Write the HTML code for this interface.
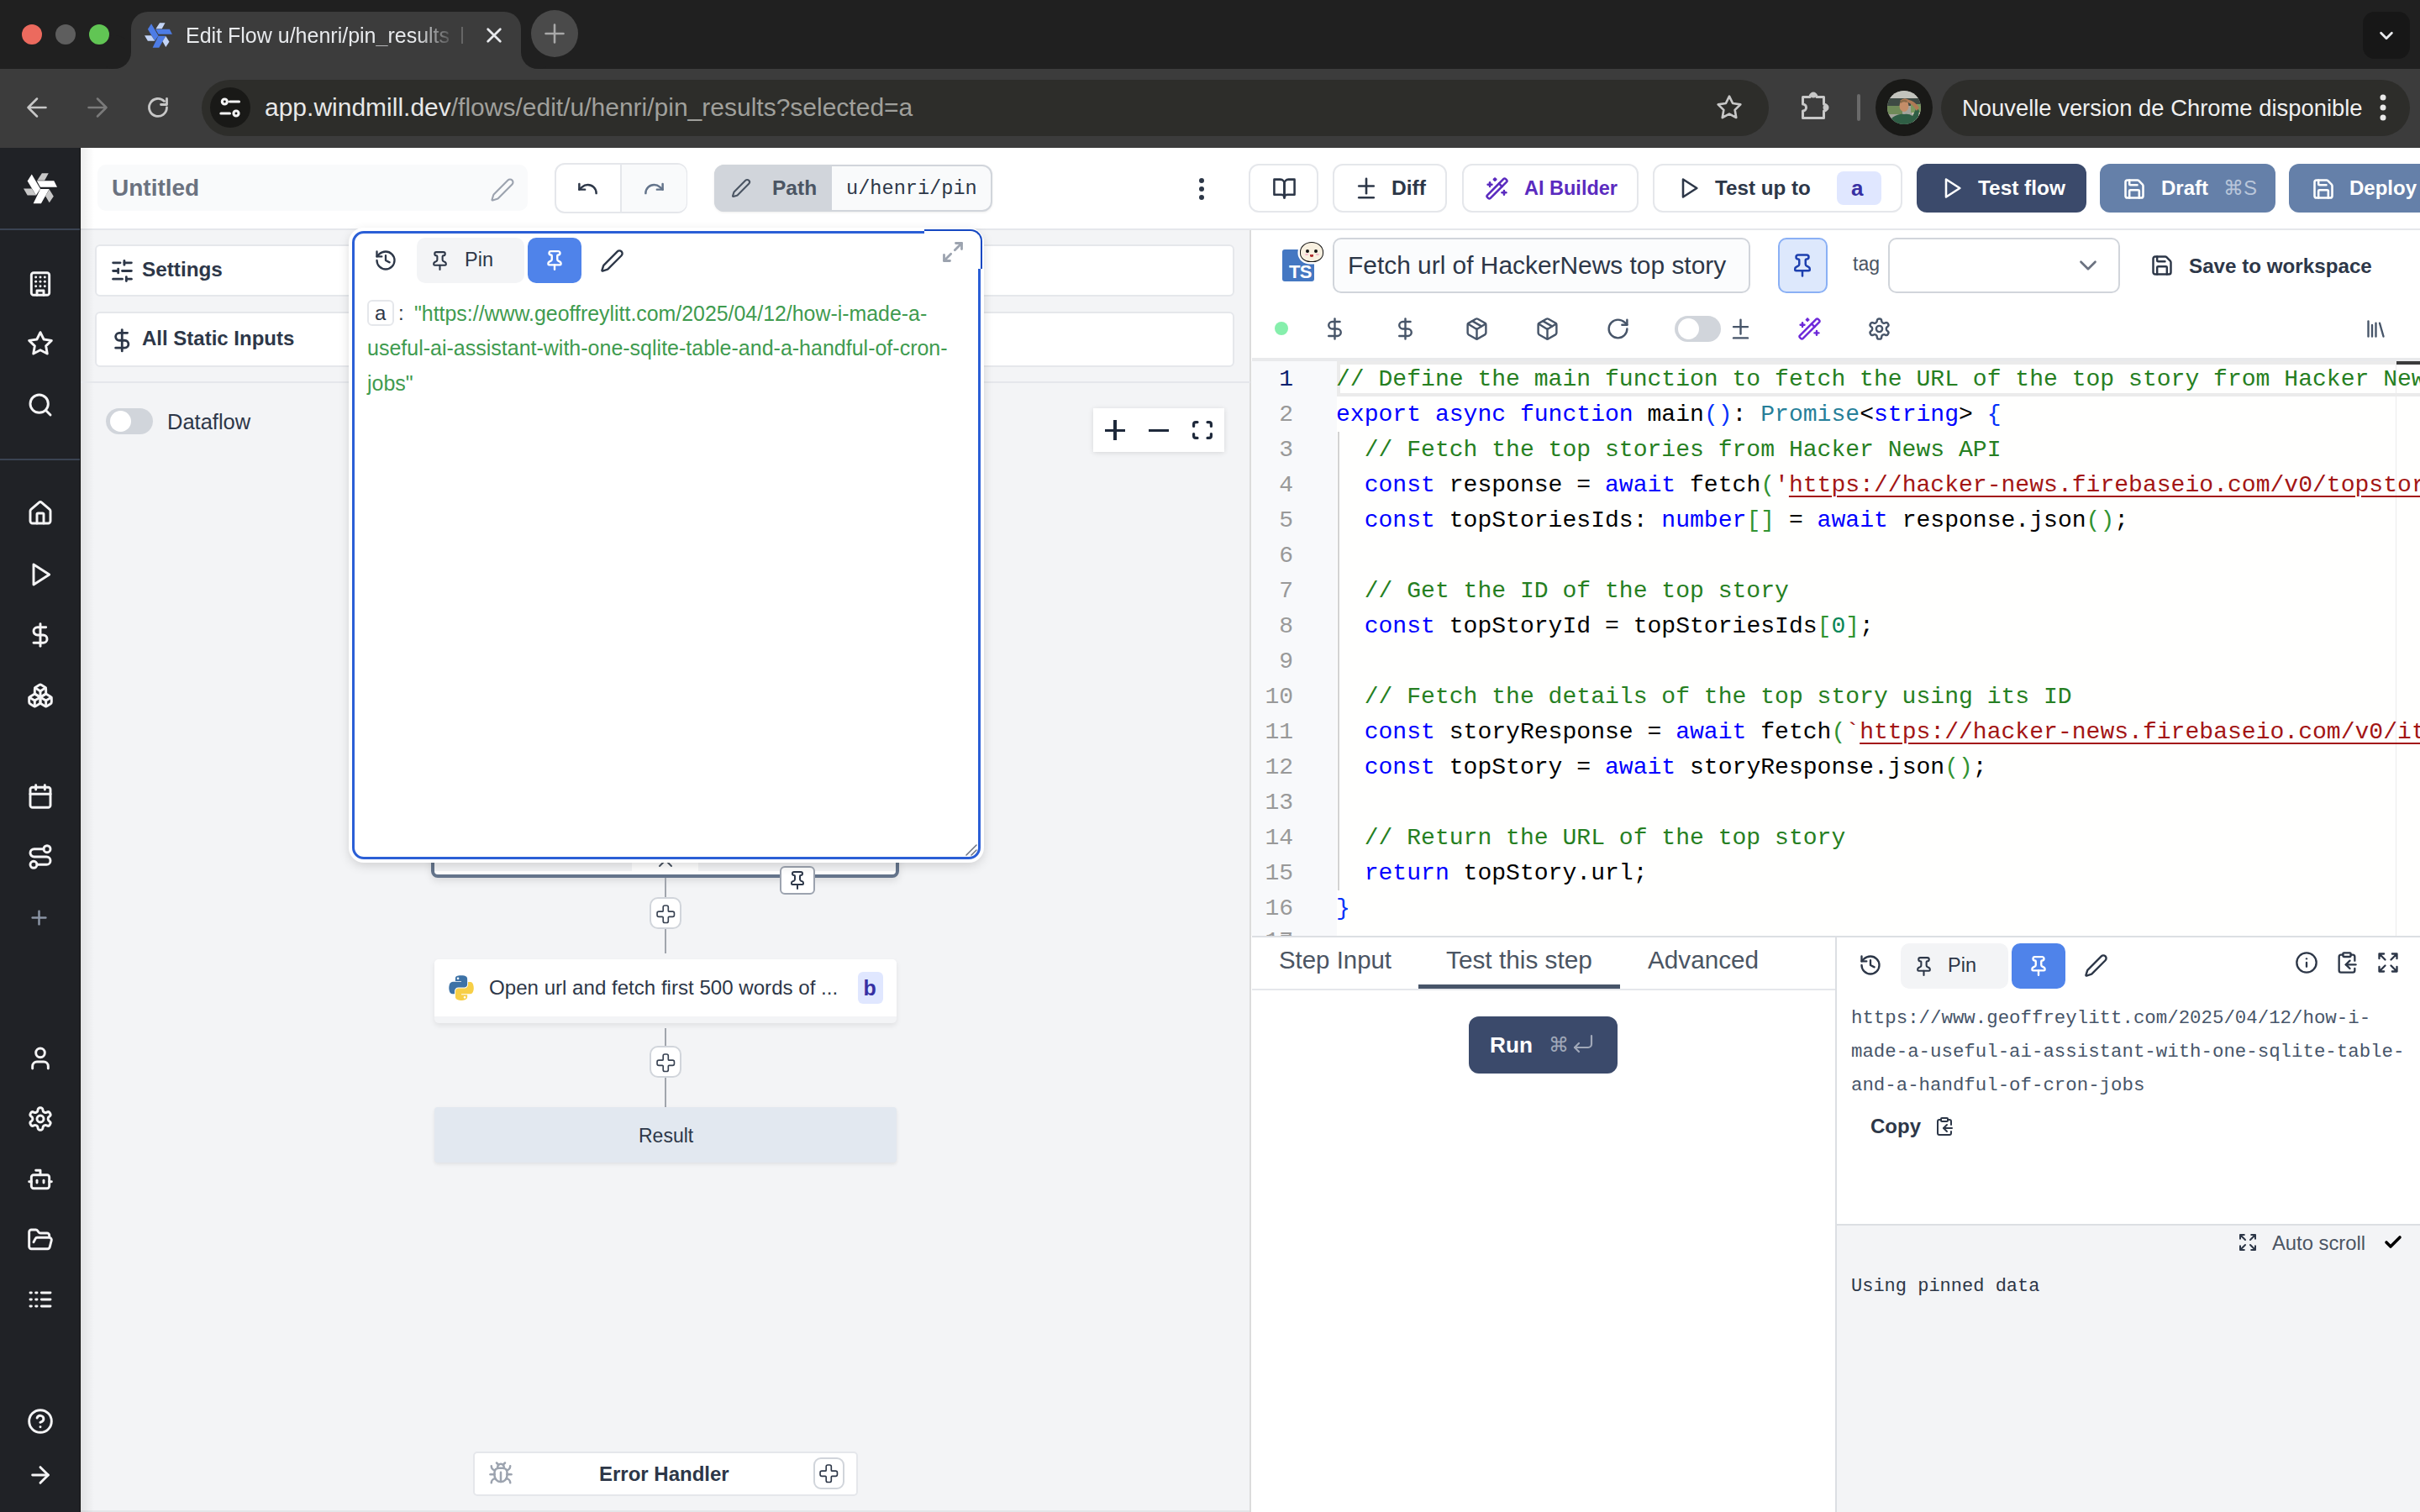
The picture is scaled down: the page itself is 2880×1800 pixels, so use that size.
<!DOCTYPE html>
<html><head><meta charset="utf-8">
<style>
*{box-sizing:border-box;margin:0;padding:0}
html,body{width:2880px;height:1800px;overflow:hidden;background:#fff;font-family:"Liberation Sans",sans-serif}
.a{position:absolute}
svg.i{position:absolute;fill:none;stroke-linecap:round;stroke-linejoin:round}
.t{position:absolute;white-space:nowrap;line-height:1}
.mono{font-family:"Liberation Mono",monospace}
</style></head><body>
<!-- ============ CHROME ============ -->
<div class="a" style="left:0;top:0;width:2880px;height:82px;background:#202020"></div>
<!-- active tab -->
<div class="a" style="left:156px;top:14px;width:464px;height:70px;background:#3c3c3c;border-radius:20px 20px 0 0"></div>
<div class="a" style="left:136px;top:62px;width:20px;height:20px;background:#3c3c3c"></div>
<div class="a" style="left:116px;top:42px;width:40px;height:40px;background:#202020;border-radius:50%"></div>
<div class="a" style="left:620px;top:62px;width:20px;height:20px;background:#3c3c3c"></div>
<div class="a" style="left:620px;top:42px;width:40px;height:40px;background:#202020;border-radius:50%"></div>
<div class="a" style="left:26px;top:29px;width:24px;height:24px;border-radius:50%;background:#ec6a5e"></div>
<div class="a" style="left:66px;top:29px;width:24px;height:24px;border-radius:50%;background:#5e5e5e"></div>
<div class="a" style="left:106px;top:29px;width:24px;height:24px;border-radius:50%;background:#61c554"></div>
<!-- favicon -->
<svg class="a" style="left:172px;top:27px;width:33px;height:30px" viewBox="170 340 860 785"><polygon points="380,370 600,745 490,910 270,545" fill="#4d7ce6"/><polygon points="510,540 950,540 1030,700 600,700" fill="#4d7ce6"/><polygon points="600,750 830,750 620,1120 420,1120" fill="#4d7ce6"/><polygon points="170,740 380,740 490,910 270,910" fill="#c3d4f6"/><polygon points="640,345 810,345 710,530 520,530" fill="#c3d4f6"/><polygon points="830,760 940,935 830,1100 730,925" fill="#c3d4f6"/></svg>
<div class="t" style="left:221px;top:30px;font-size:25px;color:#e8eaed;width:322px;overflow:hidden;-webkit-mask-image:linear-gradient(90deg,#000 85%,transparent 100%)">Edit Flow u/henri/pin_results</div>
<div class="a" style="left:549px;top:32px;width:2px;height:20px;background:#666"></div>
<svg class="i" style="left:577px;top:31px;width:22px;height:22px" viewBox="0 0 24 24" stroke="#e8eaed" stroke-width="3"><path d="M4 4l16 16M20 4L4 20"/></svg>
<div class="a" style="left:632px;top:12px;width:56px;height:56px;border-radius:50%;background:#4a4a4a"></div>
<svg class="i" style="left:646px;top:26px;width:28px;height:28px" viewBox="0 0 24 24" stroke="#a8a8a8" stroke-width="2.2"><path d="M12 3v18M3 12h18"/></svg>
<div class="a" style="left:2812px;top:14px;width:56px;height:56px;border-radius:14px;background:#171717"></div>
<svg class="i" style="left:2829px;top:31px;width:22px;height:22px" viewBox="0 0 24 24" stroke="#e8eaed" stroke-width="3"><path d="m5 9 7 7 7-7"/></svg>
<!-- toolbar -->
<div class="a" style="left:0;top:82px;width:2880px;height:94px;background:#3c3c3c"></div>
<svg class="i" style="left:30px;top:114px;width:28px;height:28px" viewBox="0 0 24 24" stroke="#c7c7c7" stroke-width="2.2"><path d="M21 12H3m9-9-9 9 9 9"/></svg>
<svg class="i" style="left:102px;top:114px;width:28px;height:28px" viewBox="0 0 24 24" stroke="#7a7a7a" stroke-width="2.2"><path d="M3 12h18m-9-9 9 9-9 9"/></svg>
<svg class="i" style="left:174px;top:114px;width:28px;height:28px" viewBox="0 0 24 24" stroke="#c7c7c7" stroke-width="2.4"><path d="M21 12a9 9 0 1 1-2.6-6.4"/><path d="M21 3v6h-6"/></svg>
<div class="a" style="left:240px;top:95px;width:1865px;height:67px;border-radius:34px;background:#2d2d2a"></div>
<div class="a" style="left:250px;top:104px;width:48px;height:48px;border-radius:50%;background:#191917"></div>
<svg class="i" style="left:260px;top:114px;width:28px;height:28px" viewBox="0 0 24 24" stroke="#f4f4f4" stroke-width="2.7" stroke-linecap="butt"><circle cx="6.3" cy="6" r="2.6"/><path d="M11.5 6H21"/><circle cx="18" cy="18" r="2.6"/><path d="M2.5 18h9"/></svg>
<div class="t" style="left:315px;top:113px;font-size:30px;color:#e8e8e8">app.windmill.dev<span style="color:#a0a09c">/flows/edit/u/henri/pin_results?selected=a</span></div>
<svg class="i" style="left:2042px;top:112px;width:32px;height:32px" viewBox="0 0 24 24" stroke="#c7c7c7" stroke-width="2"><polygon points="12 2 15.09 8.26 22 9.27 17 14.14 18.18 21.02 12 17.77 5.82 21.02 7 14.14 2 9.27 8.91 8.26 12 2"/></svg>
<svg class="a" style="left:0;top:0;width:2880px;height:180px;pointer-events:none" viewBox="0 0 2880 180"><path d="M2145.5 115.5H2154A4 4 0 0 1 2162 115.5H2170.5V124A4 4 0 0 1 2170.5 132V140.5H2145.5V132A4 4 0 0 0 2145.5 124Z" fill="none" stroke="#c8c8c8" stroke-width="3" stroke-linejoin="round"/><circle cx="2158" cy="113" r="3.5" fill="#c8c8c8"/><circle cx="2173" cy="128" r="3.5" fill="#c8c8c8"/></svg>
<div class="a" style="left:2210px;top:112px;width:4px;height:32px;background:#6a6a6a;border-radius:2px"></div>
<div class="a" style="left:2232px;top:94px;width:68px;height:68px;border-radius:50%;background:#191917"></div>
<svg class="a" style="left:2246px;top:108px;width:40px;height:40px" viewBox="0 0 40 40"><defs><clipPath id="avc"><circle cx="20" cy="20" r="20"/></clipPath></defs><g clip-path="url(#avc)"><rect width="40" height="40" fill="#a3a49c"/><rect y="0" width="40" height="9" fill="#c2c3bd"/><rect x="0" y="9" width="40" height="9" fill="#3e4a44"/><rect x="0" y="18" width="18" height="10" fill="#6f8a58"/><rect x="28" y="16" width="12" height="10" fill="#7b9a60"/><rect x="30" y="26" width="10" height="14" fill="#e0d6c0"/><path d="M2 40 L6 32 Q14 27 20 28 Q26 27 30 30 L34 22 Q36 20 38 24 L36 40Z" fill="#2f5e45"/><ellipse cx="20" cy="18" rx="5.5" ry="7" fill="#c48d68"/><path d="M15 12 Q20 7 26 11 Q32 12 38 20 L35 24 Q30 16 25 14 Z" fill="#b07a55"/><path d="M15 13 Q19 9 24 12 L23 14 Q19 12 16 15Z" fill="#8a6a48"/></g></svg>
<div class="a" style="left:2310px;top:95px;width:558px;height:67px;border-radius:34px;background:#2d2d2a"></div>
<div class="t" style="left:2335px;top:115px;font-size:27.4px;color:#f0f0f0">Nouvelle version de Chrome disponible</div>
<svg class="a" style="left:2826px;top:110px;width:20px;height:36px" viewBox="0 0 20 36"><circle cx="10" cy="6" r="3.5" fill="#e8e8e8"/><circle cx="10" cy="18" r="3.5" fill="#e8e8e8"/><circle cx="10" cy="30" r="3.5" fill="#e8e8e8"/></svg>

<!-- ============ APP ============ -->
<!-- sidebar -->
<div class="a" style="left:0;top:176px;width:96px;height:1624px;background:#202226"></div>
<svg class="a" style="left:28px;top:206px;width:40px;height:36.5px" viewBox="170 340 860 785"><polygon points="380,370 600,745 490,910 270,545" fill="#fff"/><polygon points="510,540 950,540 1030,700 600,700" fill="#fff"/><polygon points="600,750 830,750 620,1120 420,1120" fill="#fff"/><polygon points="170,740 380,740 490,910 270,910" fill="#c8c8c8"/><polygon points="640,345 810,345 710,530 520,530" fill="#c8c8c8"/><polygon points="830,760 940,935 830,1100 730,925" fill="#c8c8c8"/></svg>
<div class="a" style="left:0;top:272px;width:96px;height:2px;background:#3a4352"></div>
<div class="a" style="left:0;top:546px;width:96px;height:2px;background:#3a4352"></div>
<svg class="i" style="left:32.0px;top:322.0px;width:32px;height:32px" viewBox="0 0 24 24" stroke="#f4f4f5" stroke-width="2.2"><rect width="16" height="20" x="4" y="2" rx="2" ry="2"/><path d="M9 22v-4h6v4"/><path d="M8 6h.01"/><path d="M16 6h.01"/><path d="M12 6h.01"/><path d="M12 10h.01"/><path d="M12 14h.01"/><path d="M16 10h.01"/><path d="M16 14h.01"/><path d="M8 10h.01"/><path d="M8 14h.01"/></svg>
<svg class="i" style="left:32.0px;top:393.0px;width:32px;height:32px" viewBox="0 0 24 24" stroke="#f4f4f5" stroke-width="2.2"><polygon points="12 2 15.09 8.26 22 9.27 17 14.14 18.18 21.02 12 17.77 5.82 21.02 7 14.14 2 9.27 8.91 8.26 12 2"/></svg>
<svg class="i" style="left:32.0px;top:466.0px;width:32px;height:32px" viewBox="0 0 24 24" stroke="#f4f4f5" stroke-width="2.2"><circle cx="11" cy="11" r="8"/><path d="m21 21-4.3-4.3"/></svg>
<svg class="i" style="left:32.0px;top:595.0px;width:32px;height:32px" viewBox="0 0 24 24" stroke="#f4f4f5" stroke-width="2.2"><path d="M15 21v-8a1 1 0 0 0-1-1h-4a1 1 0 0 0-1 1v8"/><path d="M3 10a2 2 0 0 1 .709-1.528l7-5.999a2 2 0 0 1 2.582 0l7 5.999A2 2 0 0 1 21 10v9a2 2 0 0 1-2 2H5a2 2 0 0 1-2-2z"/></svg>
<svg class="i" style="left:32.0px;top:668.0px;width:32px;height:32px" viewBox="0 0 24 24" stroke="#f4f4f5" stroke-width="2.2"><polygon points="6 3 20 12 6 21 6 3"/></svg>
<svg class="i" style="left:32.0px;top:740.0px;width:32px;height:32px" viewBox="0 0 24 24" stroke="#f4f4f5" stroke-width="2.2"><line x1="12" x2="12" y1="2" y2="22"/><path d="M17 5H9.5a3.5 3.5 0 0 0 0 7h5a3.5 3.5 0 0 1 0 7H6"/></svg>
<svg class="i" style="left:32.0px;top:812.0px;width:32px;height:32px" viewBox="0 0 24 24" stroke="#f4f4f5" stroke-width="2.2"><path d="M2.97 12.92A2 2 0 0 0 2 14.63v3.24a2 2 0 0 0 .97 1.71l3 1.8a2 2 0 0 0 2.06 0L12 19v-5.5l-5-3-4.03 2.42Z"/><path d="m7 16.5-4.74-2.85"/><path d="m7 16.5 5-3"/><path d="M7 16.5v5.17"/><path d="M12 13.5V19l3.970 2.38a2 2 0 0 0 2.06 0l3-1.8a2 2 0 0 0 .97-1.71v-3.24a2 2 0 0 0-.97-1.71L17 10.5l-5 3Z"/><path d="m17 16.5-5-3"/><path d="m17 16.5 4.740-2.85"/><path d="M17 16.5v5.17"/><path d="M7.97 4.42A2 2 0 0 0 7 6.13v4.37l5 3 5-3V6.130a2 2 0 0 0-.97-1.71l-3-1.8a2 2 0 0 0-2.06 0l-3 1.8Z"/><path d="M12 8 7.26 5.15"/><path d="m12 8 4.74-2.85"/><path d="M12 13.5V8"/></svg>
<svg class="i" style="left:32.0px;top:932.0px;width:32px;height:32px" viewBox="0 0 24 24" stroke="#f4f4f5" stroke-width="2.2"><path d="M8 2v4"/><path d="M16 2v4"/><rect width="18" height="18" x="3" y="4" rx="2"/><path d="M3 10h18"/></svg>
<svg class="i" style="left:32.0px;top:1004.0px;width:32px;height:32px" viewBox="0 0 24 24" stroke="#f4f4f5" stroke-width="2.2"><circle cx="6" cy="19" r="3"/><path d="M9 19h8.5a3.5 3.5 0 0 0 0-7h-11a3.5 3.5 0 0 1 0-7H15"/><circle cx="18" cy="5" r="3"/></svg>
<svg class="i" style="left:32.0px;top:1244.0px;width:32px;height:32px" viewBox="0 0 24 24" stroke="#f4f4f5" stroke-width="2.2"><path d="M19 21v-2a4 4 0 0 0-4-4H9a4 4 0 0 0-4 4v2"/><circle cx="12" cy="7" r="4"/></svg>
<svg class="i" style="left:32.0px;top:1316.0px;width:32px;height:32px" viewBox="0 0 24 24" stroke="#f4f4f5" stroke-width="2.2"><path d="M12.22 2h-.44a2 2 0 0 0-2 2v.18a2 2 0 0 1-1 1.730l-.43.25a2 2 0 0 1-2 0l-.15-.08a2 2 0 0 0-2.73.73l-.22.38a2 2 0 0 0 .73 2.73l.15.1a2 2 0 0 1 1 1.72v.51a2 2 0 0 1-1 1.74l-.15.09a2 2 0 0 0-.73 2.73l.22.38a2 2 0 0 0 2.73.73l.15-.08a2 2 0 0 1 2 0l.43.25a2 2 0 0 1 1 1.73V20a2 2 0 0 0 2 2h.44a2 2 0 0 0 2-2v-.18a2 2 0 0 1 1-1.73l.43-.25a2 2 0 0 1 2 0l.15.08a2 2 0 0 0 2.73-.73l.22-.39a2 2 0 0 0-.73-2.73l-.15-.08a2 2 0 0 1-1-1.74v-.5a2 2 0 0 1 1-1.74l.15-.09a2 2 0 0 0 .73-2.73l-.22-.38a2 2 0 0 0-2.73-.73l-.15.08a2 2 0 0 1-2 0l-.43-.25a2 2 0 0 1-1-1.73V4a2 2 0 0 0-2-2z"/><circle cx="12" cy="12" r="3"/></svg>
<svg class="i" style="left:32.0px;top:1388.0px;width:32px;height:32px" viewBox="0 0 24 24" stroke="#f4f4f5" stroke-width="2.2"><path d="M12 8V4H8"/><rect width="16" height="12" x="4" y="8" rx="2"/><path d="M2 14h2"/><path d="M20 14h2"/><path d="M15 13v2"/><path d="M9 13v2"/></svg>
<svg class="i" style="left:32.0px;top:1460.0px;width:32px;height:32px" viewBox="0 0 24 24" stroke="#f4f4f5" stroke-width="2.2"><path d="m6 14 1.5-2.9A2 2 0 0 1 9.24 10H20a2 2 0 0 1 1.94 2.5l-1.54 6a2 2 0 0 1-1.95 1.5H4a2 2 0 0 1-2-2V5a2 2 0 0 1 2-2h3.9a2 2 0 0 1 1.69.9l.81 1.2a2 2 0 0 0 1.67.9H18a2 2 0 0 1 2 2v2"/></svg>
<svg class="i" style="left:32.0px;top:1531.0px;width:32px;height:32px" viewBox="0 0 24 24" stroke="#f4f4f5" stroke-width="2.2"><path d="M13 12h8"/><path d="M13 18h8"/><path d="M13 6h8"/><path d="M3 12h1"/><path d="M3 18h1"/><path d="M3 6h1"/><path d="M8 12h1"/><path d="M8 18h1"/><path d="M8 6h1"/></svg>
<svg class="i" style="left:32.0px;top:1676.0px;width:32px;height:32px" viewBox="0 0 24 24" stroke="#f4f4f5" stroke-width="2.2"><circle cx="12" cy="12" r="10"/><path d="M9.09 9a3 3 0 0 1 5.83 1c0 2-3 3-3 3"/><path d="M12 17h.01"/></svg>
<svg class="i" style="left:32.0px;top:1740.0px;width:32px;height:32px" viewBox="0 0 24 24" stroke="#f4f4f5" stroke-width="2.2"><path d="M5 12h14"/><path d="m12 5 7 7-7 7"/></svg>
<svg class="i" style="left:32.5px;top:1078.5px;width:27px;height:27px" viewBox="0 0 24 24" stroke="#8b95a5" stroke-width="2.2"><path d="M5 12h14"/><path d="M12 5v14"/></svg>
<div class="a" style="left:96px;top:176px;width:2784px;height:98px;background:#fff"></div>
<div class="a" style="left:96px;top:272px;width:2784px;height:2px;background:#e5e7eb"></div>
<div class="a" style="left:116px;top:196px;width:512px;height:55px;background:#f9fafb;border-radius:10px"></div>
<div class="t" style="left:133px;top:210.00px;font-size:28px;color:#6b7280;font-weight:700;font-family:'Liberation Sans',sans-serif;">Untitled</div>
<svg class="i" style="left:583.00px;top:211.00px;width:30px;height:30px;" viewBox="0 0 24 24" stroke="#9ca3af" stroke-width="1.7"><path d="M21.174 6.812a1 1 0 0 0-3.986-3.987L3.842 16.174a2 2 0 0 0-.5.83l-1.321 4.352a.5.5 0 0 0 .623.622l4.353-1.32a2 2 0 0 0 .83-.497z"/></svg>
<div class="a" style="left:660px;top:194px;width:158px;height:60px;border:2px solid #e5e7eb;border-radius:12px;background:#fff;overflow:hidden"></div>
<div class="a" style="left:739px;top:196px;width:78px;height:56px;background:#f9fafb;border-radius:0 10px 10px 0"></div>
<div class="a" style="left:738px;top:196px;width:2px;height:56px;background:#e5e7eb"></div>
<svg class="i" style="left:686.00px;top:211.00px;width:27px;height:27px;" viewBox="0 0 24 24" stroke="#2d3748" stroke-width="2.2"><path d="M3 7v6h6"/><path d="M21 17a9 9 0 0 0-9-9 9 9 0 0 0-6 2.3L3 13"/></svg>
<svg class="i" style="left:764.50px;top:211.00px;width:27px;height:27px;" viewBox="0 0 24 24" stroke="#64748b" stroke-width="2.2"><path d="M21 7v6h-6"/><path d="M3 17a9 9 0 0 1 9-9 9 9 0 0 1 6 2.3l3 2.7"/></svg>
<div class="a" style="left:850px;top:196px;width:331px;height:56px;border:2px solid #d1d5db;border-radius:12px;background:#f9fafb;overflow:hidden;box-shadow:0 1px 3px rgba(0,0,0,.08)"></div>
<div class="a" style="left:850px;top:196px;width:140px;height:56px;background:#d1d5db;border-radius:12px 0 0 12px"></div>
<svg class="i" style="left:870.00px;top:212.00px;width:24px;height:24px;" viewBox="0 0 24 24" stroke="#4b5563" stroke-width="2.1"><path d="M21.174 6.812a1 1 0 0 0-3.986-3.987L3.842 16.174a2 2 0 0 0-.5.83l-1.321 4.352a.5.5 0 0 0 .623.622l4.353-1.32a2 2 0 0 0 .83-.497z"/></svg>
<div class="t" style="left:919px;top:212.19px;font-size:24.5px;color:#4b5563;font-weight:700;font-family:'Liberation Sans',sans-serif;">Path</div>
<div class="t" style="left:1007px;top:212.69px;font-size:23.6px;color:#2d3748;font-weight:400;font-family:'Liberation Mono',monospace;">u/henri/pin</div>
<div class="a" style="left:1427px;top:212px;width:6px;height:6px;background:#2d3748;border-radius:50%"></div>
<div class="a" style="left:1427px;top:222px;width:6px;height:6px;background:#2d3748;border-radius:50%"></div>
<div class="a" style="left:1427px;top:232px;width:6px;height:6px;background:#2d3748;border-radius:50%"></div>
<div class="a" style="left:1486px;top:195px;width:83px;height:58px;background:#fff;border:2px solid #e5e7eb;border-radius:12px"></div>
<svg class="i" style="left:1513.50px;top:209.50px;width:29px;height:29px;" viewBox="0 0 24 24" stroke="#2d3748" stroke-width="2.1"><path d="M2 3h6a4 4 0 0 1 4 4v14a3 3 0 0 0-3-3H2z"/><path d="M22 3h-6a4 4 0 0 0-4 4v14a3 3 0 0 1 3-3h7z"/></svg>
<div class="a" style="left:1586px;top:195px;width:136px;height:58px;background:#fff;border:2px solid #e5e7eb;border-radius:12px"></div>
<svg class="i" style="left:1611.00px;top:209.00px;width:30px;height:30px;" viewBox="0 0 24 24" stroke="#2d3748" stroke-width="2.1"><path d="M12 3v14"/><path d="M5 10h14"/><path d="M5 21h14"/></svg>
<div class="t" style="left:1656px;top:212.14px;font-size:24.6px;color:#2d3748;font-weight:700;font-family:'Liberation Sans',sans-serif;">Diff</div>
<div class="a" style="left:1740px;top:195px;width:210px;height:58px;background:#fff;border:2px solid #e5e7eb;border-radius:12px"></div>
<svg class="i" style="left:1766.50px;top:209.50px;width:29px;height:29px;" viewBox="0 0 24 24" stroke="#5b2bbf" stroke-width="2.1"><path d="m21.64 3.64-1.28-1.28a1.21 1.21 0 0 0-1.72 0L2.36 18.64a1.21 1.21 0 0 0 0 1.72l1.28 1.28a1.2 1.2 0 0 0 1.72 0L21.64 5.36a1.2 1.2 0 0 0 0-1.72"/><path d="m14 7 3 3"/><path d="M5 6v4"/><path d="M19 14v4"/><path d="M10 2v2"/><path d="M7 8H3"/><path d="M21 16h-4"/><path d="M11 3H9"/></svg>
<div class="t" style="left:1814px;top:212.67px;font-size:23.5px;color:#5b2bbf;font-weight:700;font-family:'Liberation Sans',sans-serif;">AI Builder</div>
<div class="a" style="left:1967px;top:195px;width:297px;height:58px;background:#fff;border:2px solid #e5e7eb;border-radius:12px"></div>
<svg class="i" style="left:1996.00px;top:210.00px;width:28px;height:28px;" viewBox="0 0 24 24" stroke="#2d3748" stroke-width="2.2"><polygon points="6 3 20 12 6 21 6 3"/></svg>
<div class="t" style="left:2041px;top:212.34px;font-size:24.2px;color:#2d3748;font-weight:700;font-family:'Liberation Sans',sans-serif;">Test up to</div>
<div class="a" style="left:2186px;top:204px;width:53px;height:40px;background:#e0e7ff;border-radius:8px"></div>
<div class="t" style="left:2203px;top:211.47px;font-size:26px;color:#3730a3;font-weight:700;font-family:'Liberation Sans',sans-serif;">a</div>
<div class="a" style="left:2281px;top:195px;width:202px;height:58px;background:#3b4a6b;border-radius:12px"></div>
<svg class="i" style="left:2309.00px;top:210.00px;width:28px;height:28px;" viewBox="0 0 24 24" stroke="#fff" stroke-width="2.2"><polygon points="6 3 20 12 6 21 6 3"/></svg>
<div class="t" style="left:2354px;top:212.24px;font-size:24.4px;color:#fff;font-weight:700;font-family:'Liberation Sans',sans-serif;">Test flow</div>
<div class="a" style="left:2499px;top:195px;width:209px;height:58px;background:#6580a9;border-radius:12px"></div>
<svg class="i" style="left:2525.50px;top:210.50px;width:28px;height:28px;" viewBox="0 0 24 24" stroke="#fff" stroke-width="2.2"><path d="M15.2 3a2 2 0 0 1 1.4.6l3.8 3.8a2 2 0 0 1 .6 1.4V19a2 2 0 0 1-2 2H5a2 2 0 0 1-2-2V5a2 2 0 0 1 2-2z"/><path d="M17 21v-7a1 1 0 0 0-1-1H8a1 1 0 0 0-1 1v7"/><path d="M7 3v4a1 1 0 0 0 1 1h7"/></svg>
<div class="t" style="left:2572px;top:212.43px;font-size:24px;color:#fff;font-weight:700;font-family:'Liberation Sans',sans-serif;">Draft</div>
<div class="t" style="left:2646px;top:212.43px;font-size:24px;color:#b9c6da;font-weight:400;font-family:'Liberation Sans',sans-serif;">⌘S</div>
<div class="a" style="left:2724px;top:195px;width:200px;height:58px;background:#6580a9;border-radius:12px"></div>
<svg class="i" style="left:2750.50px;top:210.50px;width:28px;height:28px;" viewBox="0 0 24 24" stroke="#fff" stroke-width="2.2"><path d="M15.2 3a2 2 0 0 1 1.4.6l3.8 3.8a2 2 0 0 1 .6 1.4V19a2 2 0 0 1-2 2H5a2 2 0 0 1-2-2V5a2 2 0 0 1 2-2z"/><path d="M17 21v-7a1 1 0 0 0-1-1H8a1 1 0 0 0-1 1v7"/><path d="M7 3v4a1 1 0 0 0 1 1h7"/></svg>
<div class="t" style="left:2796px;top:212.43px;font-size:24px;color:#fff;font-weight:700;font-family:'Liberation Sans',sans-serif;">Deploy</div>
<div class="a" style="left:96px;top:274px;width:1392px;height:1526px;background:#f3f4f6"></div>
<div class="a" style="left:1487px;top:274px;width:2px;height:1526px;background:#dcdcdc"></div>
<div class="a" style="left:96px;top:1798px;width:1391px;height:2px;background:#e4e6e9"></div>
<div class="a" style="left:96px;top:176px;width:16px;height:1624px;background:linear-gradient(90deg,rgba(0,0,0,.07),rgba(0,0,0,0))"></div>
<div class="a" style="left:95px;top:176px;width:1px;height:1624px;background:#111"></div>
<div class="a" style="left:113px;top:291px;width:1356px;height:62px;background:#fff;border:2px solid #e5e7eb;border-radius:6px"></div>
<svg class="i" style="left:131.00px;top:307.50px;width:29px;height:29px;" viewBox="0 0 24 24" stroke="#2d3748" stroke-width="2.3"><line x1="21" x2="14" y1="4" y2="4"/><line x1="10" x2="3" y1="4" y2="4"/><line x1="21" x2="12" y1="12" y2="12"/><line x1="8" x2="3" y1="12" y2="12"/><line x1="21" x2="16" y1="20" y2="20"/><line x1="12" x2="3" y1="20" y2="20"/><line x1="14" x2="14" y1="2" y2="6"/><line x1="8" x2="8" y1="10" y2="14"/><line x1="16" x2="16" y1="18" y2="22"/></svg>
<div class="t" style="left:169px;top:309.29px;font-size:24.3px;color:#2d3748;font-weight:700;font-family:'Liberation Sans',sans-serif;">Settings</div>
<div class="a" style="left:113px;top:371px;width:1356px;height:66px;background:#fff;border:2px solid #e5e7eb;border-radius:6px"></div>
<svg class="i" style="left:129.75px;top:389.75px;width:30.5px;height:30.5px;" viewBox="0 0 24 24" stroke="#2d3748" stroke-width="2.2"><line x1="12" x2="12" y1="2" y2="22"/><path d="M17 5H9.5a3.5 3.5 0 0 0 0 7h5a3.5 3.5 0 0 1 0 7H6"/></svg>
<div class="t" style="left:169px;top:391.43px;font-size:24px;color:#2d3748;font-weight:700;font-family:'Liberation Sans',sans-serif;">All Static Inputs</div>
<div class="a" style="left:96px;top:454px;width:1392px;height:2px;background:#e5e7eb"></div>
<div class="a" style="left:126px;top:486px;width:56px;height:31px;background:#d1d5db;border-radius:16px"></div>
<div class="a" style="left:131px;top:489px;width:25px;height:25px;background:#fff;border-radius:50%"></div>
<div class="t" style="left:199px;top:489.71px;font-size:25.5px;color:#2d3748;font-weight:400;font-family:'Liberation Sans',sans-serif;">Dataflow</div>
<div class="a" style="left:1301px;top:486px;width:156px;height:52px;background:#fff;box-shadow:0 1px 6px rgba(0,0,0,.12)"></div>
<div class="a" style="left:1315px;top:510.5px;width:24px;height:3.2px;background:#1e293b"></div>
<div class="a" style="left:1325.4px;top:500px;width:3.2px;height:24px;background:#1e293b"></div>
<div class="a" style="left:1367px;top:510.5px;width:24px;height:3.2px;background:#1e293b"></div>
<svg class="i" style="left:1417px;top:499px;width:28px;height:26px" viewBox="0 0 28 26" stroke="#1e293b" stroke-width="3.2" stroke-linecap="butt"><path d="M8 3.6H6a2.4 2.4 0 0 0-2.4 2.4v2.4M20 3.6h2a2.4 2.4 0 0 1 2.4 2.4v2.4M3.6 17.6V20a2.4 2.4 0 0 0 2.4 2.4H8M24.4 17.6V20a2.4 2.4 0 0 1-2.4 2.4H20"/></svg>
<div class="a" style="left:513px;top:900px;width:557px;height:145px;border:4px solid #64748b;border-radius:0 0 8px 8px;background:#fff;box-shadow:0 4px 10px rgba(0,0,0,.10)"></div>
<div class="a" style="left:517px;top:1023px;width:235px;height:14px;background:#f3f4f6"></div>
<div class="a" style="left:831px;top:1023px;width:235px;height:14px;background:#f3f4f6"></div>
<svg class="i" style="left:782px;top:1020px;width:20px;height:14px" viewBox="0 0 20 14" stroke="#4b5563" stroke-width="2"><path d="M3 11l7-7 7 7"/></svg>
<div class="a" style="left:791.2px;top:1045px;width:1.6px;height:23px;background:#a1a5ad"></div>
<div class="a" style="left:928px;top:1031px;width:42px;height:34px;background:#fff;border:2px solid #9ca3af;border-radius:6px"></div>
<svg class="i" style="left:937.00px;top:1036.00px;width:24px;height:24px;" viewBox="0 0 24 24" stroke="#2d3748" stroke-width="2"><path d="M12 17v5"/><path d="M9 10.76a2 2 0 0 1-1.11 1.79l-1.78.9A2 2 0 0 0 5 15.24V16a1 1 0 0 0 1 1h12a1 1 0 0 0 1-1v-.76a2 2 0 0 0-1.11-1.79l-1.78-.9A2 2 0 0 1 15 10.76V7a1 1 0 0 1 1-1 2 2 0 0 0 0-4H8a2 2 0 0 0 0 4 1 1 0 0 1 1 1z"/></svg>
<div class="a" style="left:773px;top:1068px;width:38px;height:38px;background:#fff;border:2px solid #d1d5db;border-radius:10px"></div>
<svg class="i" style="left:780.25px;top:1075.75px;width:24.5px;height:24.5px;" viewBox="0 0 24 24" stroke="#374151" stroke-width="1.6"><path d="M4 9a2 2 0 0 0-2 2v2a2 2 0 0 0 2 2h4a1 1 0 0 1 1 1v4a2 2 0 0 0 2 2h2a2 2 0 0 0 2-2v-4a1 1 0 0 1 1-1h4a2 2 0 0 0 2-2v-2a2 2 0 0 0-2-2h-4a1 1 0 0 1-1-1V4a2 2 0 0 0-2-2h-2a2 2 0 0 0-2 2v4a1 1 0 0 1-1 1z"/></svg>
<div class="a" style="left:791.2px;top:1106px;width:1.6px;height:29px;background:#a1a5ad"></div>
<div class="a" style="left:517px;top:1142px;width:550px;height:76px;background:#f3f4f6;border-radius:5px;box-shadow:0 3px 6px rgba(0,0,0,.08)"></div>
<div class="a" style="left:517px;top:1142px;width:550px;height:68px;background:#fff;border-radius:5px 5px 0 0"></div>
<svg class="a" style="left:534px;top:1161px;width:30px;height:30px" viewBox="0 0 110 110"><path fill="#3d72a6" d="M54.6 1c-4.5 0-8.8.4-12.6 1.1C31 4 29 8.1 29 15.6v9.9h26v3.3H19.2c-7.6 0-14.2 4.5-16.3 13.1-2.4 9.9-2.5 16.1 0 26.4 1.9 7.7 6.3 13.1 13.9 13.1h9V69.5c0-8.6 7.4-16.1 16.3-16.1h26c7.2 0 13-6 13-13.3V15.6c0-7.1-6-12.4-13-13.6C63.6 1.3 59 1 54.6 1zM40.5 9c2.7 0 4.9 2.2 4.9 5 0 2.7-2.2 4.9-4.9 4.9-2.7 0-4.9-2.2-4.9-4.9 0-2.8 2.2-5 4.9-5z"/><path fill="#f7cf47" d="M84.5 28.8v11.6c0 9-7.6 16.5-16.3 16.5h-26c-7.1 0-13 6.1-13 13.3v24.8c0 7.1 6.2 11.2 13 13.2 8.2 2.4 16.1 2.8 26 0 6.5-1.9 13-5.7 13-13.2v-9.9h-26v-3.3h39c7.6 0 10.4-5.3 13-13.1 2.7-8.1 2.6-15.8 0-26.4-1.9-7.6-5.4-13.3-13-13.3h-10.7zM69.9 91.5c2.7 0 4.9 2.2 4.9 4.9 0 2.8-2.2 5-4.9 5-2.7 0-4.9-2.2-4.9-5 0-2.7 2.2-4.9 4.9-4.9z"/></svg>
<div class="t" style="left:582px;top:1164.38px;font-size:24.1px;color:#2d3748;font-weight:400;font-family:'Liberation Sans',sans-serif;">Open url and fetch first 500 words of ...</div>
<div class="a" style="left:1021px;top:1157px;width:30px;height:38px;background:#e0e7ff;border-radius:6px"></div>
<div class="t" style="left:1027.5px;top:1163.95px;font-size:25px;color:#3730a3;font-weight:700;font-family:'Liberation Sans',sans-serif;">b</div>
<div class="a" style="left:791.2px;top:1224px;width:1.6px;height:21px;background:#a1a5ad"></div>
<div class="a" style="left:773px;top:1245px;width:38px;height:38px;background:#fff;border:2px solid #d1d5db;border-radius:10px"></div>
<svg class="i" style="left:780.25px;top:1252.75px;width:24.5px;height:24.5px;" viewBox="0 0 24 24" stroke="#374151" stroke-width="1.6"><path d="M4 9a2 2 0 0 0-2 2v2a2 2 0 0 0 2 2h4a1 1 0 0 1 1 1v4a2 2 0 0 0 2 2h2a2 2 0 0 0 2-2v-4a1 1 0 0 1 1-1h4a2 2 0 0 0 2-2v-2a2 2 0 0 0-2-2h-4a1 1 0 0 1-1-1V4a2 2 0 0 0-2-2h-2a2 2 0 0 0-2 2v4a1 1 0 0 1-1 1z"/></svg>
<div class="a" style="left:791.2px;top:1283px;width:1.6px;height:35px;background:#a1a5ad"></div>
<div class="a" style="left:517px;top:1318px;width:550px;height:66px;background:#e2e8f0;border-radius:4px;box-shadow:0 2px 4px rgba(0,0,0,.08)"></div>
<div class="t" style="left:760px;top:1340.91px;font-size:23px;color:#2d3748;font-weight:400;font-family:'Liberation Sans',sans-serif;">Result</div>
<div class="a" style="left:563px;top:1728px;width:458px;height:53px;background:#fff;border:2px solid #e5e7eb;border-radius:5px"></div>
<svg class="i" style="left:581.00px;top:1739.00px;width:30px;height:30px;" viewBox="0 0 24 24" stroke="#9ca3af" stroke-width="2"><path d="m8 2 1.88 1.88"/><path d="M14.12 3.88 16 2"/><path d="M9 7.13v-1a3.003 3.003 0 1 1 6 0v1"/><path d="M12 20c-3.3 0-6-2.7-6-6v-3a4 4 0 0 1 4-4h4a4 4 0 0 1 4 4v3c0 3.3-2.7 6-6 6"/><path d="M12 20v-9"/><path d="M6.53 9C4.6 8.8 3 7.1 3 5"/><path d="M6 13H2"/><path d="M3 21c0-2.1 1.7-3.9 3.8-4"/><path d="M20.97 5c0 2.1-1.6 3.8-3.5 4"/><path d="M22 13h-4"/><path d="M17.2 17c2.1.1 3.8 1.9 3.8 4"/></svg>
<div class="t" style="left:713px;top:1742.93px;font-size:24px;color:#2d3748;font-weight:700;font-family:'Liberation Sans',sans-serif;">Error Handler</div>
<div class="a" style="left:968px;top:1735px;width:37px;height:38px;background:#fff;border:2px solid #d1d5db;border-radius:9px"></div>
<svg class="i" style="left:974.25px;top:1741.75px;width:24.5px;height:24.5px;" viewBox="0 0 24 24" stroke="#2d3748" stroke-width="1.6"><path d="M4 9a2 2 0 0 0-2 2v2a2 2 0 0 0 2 2h4a1 1 0 0 1 1 1v4a2 2 0 0 0 2 2h2a2 2 0 0 0 2-2v-4a1 1 0 0 1 1-1h4a2 2 0 0 0 2-2v-2a2 2 0 0 0-2-2h-4a1 1 0 0 1-1-1V4a2 2 0 0 0-2-2h-2a2 2 0 0 0-2 2v4a1 1 0 0 1-1 1z"/></svg>
<div class="a" style="left:417px;top:273px;width:752px;height:752px;background:#fff;border-radius:16px;box-shadow:0 0 0 2px #fff,0 4px 14px rgba(0,0,0,.18)"></div>
<div class="a" style="left:419px;top:275px;width:748px;height:748px;border:3px solid #2b5fd6;border-radius:14px"></div>
<svg class="i" style="left:445.00px;top:296.00px;width:28px;height:28px;" viewBox="0 0 24 24" stroke="#2d3748" stroke-width="2"><path d="M3 12a9 9 0 1 0 9-9 9.75 9.75 0 0 0-6.74 2.74L3 8"/><path d="M3 3v5h5"/><path d="M12 7v5l4 2"/></svg>
<div class="a" style="left:496px;top:283px;width:128px;height:54px;background:#f3f4f6;border-radius:10px"></div>
<svg class="i" style="left:511.00px;top:297.50px;width:25px;height:25px;" viewBox="0 0 24 24" stroke="#2d3748" stroke-width="2"><path d="M12 17v5"/><path d="M9 10.76a2 2 0 0 1-1.11 1.79l-1.78.9A2 2 0 0 0 5 15.24V16a1 1 0 0 0 1 1h12a1 1 0 0 0 1-1v-.76a2 2 0 0 0-1.11-1.79l-1.78-.9A2 2 0 0 1 15 10.76V7a1 1 0 0 1 1-1 2 2 0 0 0 0-4H8a2 2 0 0 0 0 4 1 1 0 0 1 1 1z"/></svg>
<div class="t" style="left:553px;top:298.17px;font-size:23.5px;color:#2d3748;font-weight:400;font-family:'Liberation Sans',sans-serif;">Pin</div>
<div class="a" style="left:628px;top:283px;width:64px;height:54px;background:#4f83ea;border-radius:10px"></div>
<svg class="i" style="left:647.00px;top:297.00px;width:26px;height:26px;" viewBox="0 0 24 24" stroke="#fff" stroke-width="2.2"><path d="M12 17v5"/><path d="M9 10.76a2 2 0 0 1-1.11 1.79l-1.78.9A2 2 0 0 0 5 15.24V16a1 1 0 0 0 1 1h12a1 1 0 0 0 1-1v-.76a2 2 0 0 0-1.11-1.79l-1.78-.9A2 2 0 0 1 15 10.76V7a1 1 0 0 1 1-1 2 2 0 0 0 0-4H8a2 2 0 0 0 0 4 1 1 0 0 1 1 1z"/></svg>
<svg class="i" style="left:713.50px;top:295.50px;width:29px;height:29px;" viewBox="0 0 24 24" stroke="#2d3748" stroke-width="2"><path d="M21.174 6.812a1 1 0 0 0-3.986-3.987L3.842 16.174a2 2 0 0 0-.5.83l-1.321 4.352a.5.5 0 0 0 .623.622l4.353-1.32a2 2 0 0 0 .83-.497z"/></svg>
<div class="a" style="left:1100px;top:273px;width:69px;height:47px;background:#fff;border-top:2.5px solid #1548c2;border-right:2.5px solid #1548c2;border-radius:0 14px 0 0"></div>
<svg class="i" style="left:1120.00px;top:286.00px;width:28px;height:28px;" viewBox="0 0 24 24" stroke="#9ca3af" stroke-width="2.4"><polyline points="15 3 21 3 21 9"/><polyline points="9 21 3 21 3 15"/><line x1="21" x2="14" y1="3" y2="10"/><line x1="3" x2="10" y1="21" y2="14"/></svg>
<div class="a" style="left:437px;top:357px;width:32px;height:31px;border:2px solid #e5e7eb;border-radius:6px;background:#fff"></div>
<div class="t" style="left:446px;top:361.43px;font-size:24px;color:#2d3748;font-weight:400;font-family:'Liberation Sans',sans-serif;">a</div>
<div class="t" style="left:474px;top:361.43px;font-size:24px;color:#2d3748;font-weight:400;font-family:'Liberation Sans',sans-serif;">:</div>
<div class="t" style="left:493px;top:360.50px;font-size:24.9px;color:#3f9b4f;font-weight:400;font-family:'Liberation Sans',sans-serif;">&quot;https://www.geoffreylitt.com/2025/04/12/how-i-made-a-</div>
<div class="t" style="left:437px;top:402.45px;font-size:25px;color:#3f9b4f;font-weight:400;font-family:'Liberation Sans',sans-serif;">useful-ai-assistant-with-one-sqlite-table-and-a-handful-of-cron-</div>
<div class="t" style="left:437px;top:443.95px;font-size:25px;color:#3f9b4f;font-weight:400;font-family:'Liberation Sans',sans-serif;">jobs&quot;</div>
<svg class="i" style="left:1144px;top:1000px;width:20px;height:20px" viewBox="0 0 20 20" stroke="#6b7280" stroke-width="1.5"><path d="M18 6 6 18M18 12l-6 6"/></svg>
<div class="a" style="left:1490px;top:274px;width:1390px;height:1526px;background:#fff"></div>
<div class="a" style="left:1526px;top:297px;width:38px;height:38px;background:#4477c2;border-radius:3px"></div>
<div class="t" style="left:1534px;top:312.90px;font-size:22px;color:#fff;font-weight:700;font-family:'Liberation Sans',sans-serif;letter-spacing:-0.8px">TS</div>
<div class="a" style="left:1547px;top:288px;width:28px;height:24px;border-radius:55% 55% 48% 48%;background:#f8f0e0;border:1.8px solid #111;box-shadow:0 0 0 2.5px #fff"></div>
<div class="a" style="left:1554px;top:297px;width:3.8px;height:3.8px;background:#111;border-radius:50%"></div>
<div class="a" style="left:1564px;top:297px;width:3.8px;height:3.8px;background:#111;border-radius:50%"></div>
<div class="a" style="left:1552.5px;top:301.5px;width:4px;height:2.5px;background:#f4b6cc;border-radius:50%"></div>
<div class="a" style="left:1566px;top:301.5px;width:4px;height:2.5px;background:#f4b6cc;border-radius:50%"></div>
<div class="a" style="left:1558.5px;top:302.5px;width:4px;height:3px;background:#b03030;border-radius:0 0 50% 50%"></div>
<div class="a" style="left:1586px;top:283px;width:497px;height:66px;border:2px solid #d1d5db;border-radius:10px;background:#fbfcfd"></div>
<div class="t" style="left:1604px;top:301.09px;font-size:29.9px;color:#2d3748;font-weight:400;font-family:'Liberation Sans',sans-serif;">Fetch url of HackerNews top story</div>
<div class="a" style="left:2116px;top:283px;width:59px;height:66px;background:#dde8fc;border:2px solid #8ab0f5;border-radius:10px"></div>
<svg class="i" style="left:2130.00px;top:301.00px;width:30px;height:30px;" viewBox="0 0 24 24" stroke="#1e40af" stroke-width="2"><path d="M12 17v5"/><path d="M9 10.76a2 2 0 0 1-1.11 1.79l-1.78.9A2 2 0 0 0 5 15.24V16a1 1 0 0 0 1 1h12a1 1 0 0 0 1-1v-.76a2 2 0 0 0-1.11-1.79l-1.78-.9A2 2 0 0 1 15 10.76V7a1 1 0 0 1 1-1 2 2 0 0 0 0-4H8a2 2 0 0 0 0 4 1 1 0 0 1 1 1z"/></svg>
<div class="t" style="left:2205px;top:302.91px;font-size:23px;color:#4b5563;font-weight:400;font-family:'Liberation Sans',sans-serif;">tag</div>
<div class="a" style="left:2247px;top:283px;width:276px;height:66px;border:2px solid #d1d5db;border-radius:10px;background:#fff"></div>
<svg class="i" style="left:2468.00px;top:299.00px;width:34px;height:34px;" viewBox="0 0 24 24" stroke="#6b7280" stroke-width="1.9"><path d="m6 9 6 6 6-6"/></svg>
<svg class="i" style="left:2558.50px;top:302.00px;width:28px;height:28px;" viewBox="0 0 24 24" stroke="#2d3748" stroke-width="2.1"><path d="M15.2 3a2 2 0 0 1 1.4.6l3.8 3.8a2 2 0 0 1 .6 1.4V19a2 2 0 0 1-2 2H5a2 2 0 0 1-2-2V5a2 2 0 0 1 2-2z"/><path d="M17 21v-7a1 1 0 0 0-1-1H8a1 1 0 0 0-1 1v7"/><path d="M7 3v4a1 1 0 0 0 1 1h7"/></svg>
<div class="t" style="left:2605px;top:304.84px;font-size:24.2px;color:#2d3748;font-weight:700;font-family:'Liberation Sans',sans-serif;">Save to workspace</div>
<div class="a" style="left:1517px;top:383px;width:16px;height:16px;background:#86efac;border-radius:50%"></div>
<svg class="i" style="left:1573.50px;top:376.50px;width:29px;height:29px;" viewBox="0 0 24 24" stroke="#475569" stroke-width="2"><line x1="12" x2="12" y1="2" y2="22"/><path d="M17 5H9.5a3.5 3.5 0 0 0 0 7h5a3.5 3.5 0 0 1 0 7H6"/></svg>
<svg class="i" style="left:1657.50px;top:376.50px;width:29px;height:29px;" viewBox="0 0 24 24" stroke="#475569" stroke-width="2"><line x1="12" x2="12" y1="2" y2="22"/><path d="M17 5H9.5a3.5 3.5 0 0 0 0 7h5a3.5 3.5 0 0 1 0 7H6"/></svg>
<svg class="i" style="left:1742.50px;top:376.50px;width:29px;height:29px;" viewBox="0 0 24 24" stroke="#475569" stroke-width="2"><path d="M11 21.73a2 2 0 0 0 2 0l7-4A2 2 0 0 0 21 16V8a2 2 0 0 0-1-1.73l-7-4a2 2 0 0 0-2 0l-7 4A2 2 0 0 0 3 8v8a2 2 0 0 0 1 1.73z"/><path d="M12 22V12"/><path d="m3.3 7 7.703 4.734a2 2 0 0 0 1.994 0L20.7 7"/><path d="m7.5 4.27 9 5.15"/></svg>
<svg class="i" style="left:1826.50px;top:376.50px;width:29px;height:29px;" viewBox="0 0 24 24" stroke="#475569" stroke-width="2"><path d="M11 21.73a2 2 0 0 0 2 0l7-4A2 2 0 0 0 21 16V8a2 2 0 0 0-1-1.73l-7-4a2 2 0 0 0-2 0l-7 4A2 2 0 0 0 3 8v8a2 2 0 0 0 1 1.73z"/><path d="M12 22V12"/><path d="m3.3 7 7.703 4.734a2 2 0 0 0 1.994 0L20.7 7"/><path d="m7.5 4.27 9 5.15"/></svg>
<svg class="i" style="left:1910.50px;top:376.50px;width:29px;height:29px;" viewBox="0 0 24 24" stroke="#475569" stroke-width="2"><path d="M21 12a9 9 0 1 1-9-9c2.52 0 4.93 1 6.74 2.74L21 8"/><path d="M21 3v5h-5"/></svg>
<div class="a" style="left:1993px;top:376px;width:55px;height:31px;background:#d1d5db;border-radius:16px"></div>
<div class="a" style="left:1997px;top:379px;width:25px;height:25px;background:#fff;border-radius:50%"></div>
<svg class="i" style="left:2056.50px;top:376.50px;width:29px;height:29px;" viewBox="0 0 24 24" stroke="#475569" stroke-width="2"><path d="M12 3v14"/><path d="M5 10h14"/><path d="M5 21h14"/></svg>
<svg class="i" style="left:2138.50px;top:376.50px;width:29px;height:29px;" viewBox="0 0 24 24" stroke="#6d28d9" stroke-width="2"><path d="m21.64 3.64-1.28-1.28a1.21 1.21 0 0 0-1.72 0L2.36 18.64a1.21 1.21 0 0 0 0 1.72l1.28 1.28a1.2 1.2 0 0 0 1.72 0L21.64 5.36a1.2 1.2 0 0 0 0-1.72"/><path d="m14 7 3 3"/><path d="M5 6v4"/><path d="M19 14v4"/><path d="M10 2v2"/><path d="M7 8H3"/><path d="M21 16h-4"/><path d="M11 3H9"/></svg>
<svg class="i" style="left:2221.50px;top:376.50px;width:29px;height:29px;" viewBox="0 0 24 24" stroke="#475569" stroke-width="2"><path d="M12.22 2h-.44a2 2 0 0 0-2 2v.18a2 2 0 0 1-1 1.730l-.43.25a2 2 0 0 1-2 0l-.15-.08a2 2 0 0 0-2.73.73l-.22.38a2 2 0 0 0 .73 2.73l.15.1a2 2 0 0 1 1 1.72v.51a2 2 0 0 1-1 1.74l-.15.09a2 2 0 0 0-.73 2.73l.22.38a2 2 0 0 0 2.73.73l.15-.08a2 2 0 0 1 2 0l.43.25a2 2 0 0 1 1 1.73V20a2 2 0 0 0 2 2h.44a2 2 0 0 0 2-2v-.18a2 2 0 0 1 1-1.73l.43-.25a2 2 0 0 1 2 0l.15.08a2 2 0 0 0 2.73-.73l.22-.39a2 2 0 0 0-.73-2.73l-.15-.08a2 2 0 0 1-1-1.74v-.5a2 2 0 0 1 1-1.74l.15-.09a2 2 0 0 0 .73-2.73l-.22-.38a2 2 0 0 0-2.73-.73l-.15.08a2 2 0 0 1-2 0l-.43-.25a2 2 0 0 1-1-1.73V4a2 2 0 0 0-2-2z"/><circle cx="12" cy="12" r="3"/></svg>
<svg class="i" style="left:2814.00px;top:377.50px;width:27px;height:27px;" viewBox="0 0 24 24" stroke="#475569" stroke-width="2.1"><path d="m16 6 4 14"/><path d="M12 6v14"/><path d="M8 8v12"/><path d="M4 4v16"/></svg>
<div class="a" style="left:1490px;top:426px;width:1390px;height:4px;background:#e9eaec"></div>
<div class="a" style="left:1490px;top:430px;width:1390px;height:684px;background:#fffffe"></div>
<div class="a" style="left:1489px;top:430px;width:102px;height:684px;background:#f8f9fb"></div>
<div class="a" style="left:1591px;top:430px;width:1289px;height:42px;border:4px solid #ebebeb;border-right:none"></div>
<div class="a" style="left:2851px;top:430px;width:1px;height:684px;background:#ececec"></div>
<div class="a" style="left:2852px;top:430px;width:28px;height:4px;background:#3b3b3b"></div>
<div class="a" style="left:1592px;top:514px;width:2px;height:546px;background:#d3d3d3"></div>
<div class="a" style="left:1490px;top:430px;width:1390px;height:684px;overflow:hidden">
<div class="t mono" style="left:0;top:1px;width:49px;text-align:right;font-size:28px;line-height:42px;color:#0b216f">1</div>
<div class="t mono" style="left:100px;top:1px;font-size:28.07px;line-height:42px;white-space:pre"><span style="color:#267f22;">// Define the main function to fetch the URL of the top story from Hacker News</span></div>
<div class="t mono" style="left:0;top:43px;width:49px;text-align:right;font-size:28px;line-height:42px;color:#999999">2</div>
<div class="t mono" style="left:100px;top:43px;font-size:28.07px;line-height:42px;white-space:pre"><span style="color:#0000ff;">export</span><span style="color:#000000;"> </span><span style="color:#0000ff;">async</span><span style="color:#000000;"> </span><span style="color:#0000ff;">function</span><span style="color:#000000;"> main</span><span style="color:#0431fa;">()</span><span style="color:#000000;">: </span><span style="color:#267f99;">Promise</span><span style="color:#000000;">&lt;</span><span style="color:#0000ff;">string</span><span style="color:#000000;">&gt; </span><span style="color:#0431fa;">{</span></div>
<div class="t mono" style="left:0;top:85px;width:49px;text-align:right;font-size:28px;line-height:42px;color:#999999">3</div>
<div class="t mono" style="left:100px;top:85px;font-size:28.07px;line-height:42px;white-space:pre"><span style="color:#000000;">  </span><span style="color:#267f22;">// Fetch the top stories from Hacker News API</span></div>
<div class="t mono" style="left:0;top:127px;width:49px;text-align:right;font-size:28px;line-height:42px;color:#999999">4</div>
<div class="t mono" style="left:100px;top:127px;font-size:28.07px;line-height:42px;white-space:pre"><span style="color:#000000;">  </span><span style="color:#0000ff;">const</span><span style="color:#000000;"> response = </span><span style="color:#0000ff;">await</span><span style="color:#000000;"> fetch</span><span style="color:#319331;">(</span><span style="color:#a31515;">&#x27;</span><span style="color:#a31515;text-decoration:underline;text-underline-offset:5px;text-decoration-thickness:2px">https://hacker-news.firebaseio.com/v0/topstories.json</span><span style="color:#a31515;">&#x27;</span><span style="color:#319331;">)</span><span style="color:#000000;">;</span></div>
<div class="t mono" style="left:0;top:169px;width:49px;text-align:right;font-size:28px;line-height:42px;color:#999999">5</div>
<div class="t mono" style="left:100px;top:169px;font-size:28.07px;line-height:42px;white-space:pre"><span style="color:#000000;">  </span><span style="color:#0000ff;">const</span><span style="color:#000000;"> topStoriesIds: </span><span style="color:#0000ff;">number</span><span style="color:#319331;">[]</span><span style="color:#000000;"> = </span><span style="color:#0000ff;">await</span><span style="color:#000000;"> response.json</span><span style="color:#319331;">()</span><span style="color:#000000;">;</span></div>
<div class="t mono" style="left:0;top:211px;width:49px;text-align:right;font-size:28px;line-height:42px;color:#999999">6</div>
<div class="t mono" style="left:100px;top:211px;font-size:28.07px;line-height:42px;white-space:pre"></div>
<div class="t mono" style="left:0;top:253px;width:49px;text-align:right;font-size:28px;line-height:42px;color:#999999">7</div>
<div class="t mono" style="left:100px;top:253px;font-size:28.07px;line-height:42px;white-space:pre"><span style="color:#000000;">  </span><span style="color:#267f22;">// Get the ID of the top story</span></div>
<div class="t mono" style="left:0;top:295px;width:49px;text-align:right;font-size:28px;line-height:42px;color:#999999">8</div>
<div class="t mono" style="left:100px;top:295px;font-size:28.07px;line-height:42px;white-space:pre"><span style="color:#000000;">  </span><span style="color:#0000ff;">const</span><span style="color:#000000;"> topStoryId = topStoriesIds</span><span style="color:#319331;">[</span><span style="color:#098658;">0</span><span style="color:#319331;">]</span><span style="color:#000000;">;</span></div>
<div class="t mono" style="left:0;top:337px;width:49px;text-align:right;font-size:28px;line-height:42px;color:#999999">9</div>
<div class="t mono" style="left:100px;top:337px;font-size:28.07px;line-height:42px;white-space:pre"></div>
<div class="t mono" style="left:0;top:379px;width:49px;text-align:right;font-size:28px;line-height:42px;color:#999999">10</div>
<div class="t mono" style="left:100px;top:379px;font-size:28.07px;line-height:42px;white-space:pre"><span style="color:#000000;">  </span><span style="color:#267f22;">// Fetch the details of the top story using its ID</span></div>
<div class="t mono" style="left:0;top:421px;width:49px;text-align:right;font-size:28px;line-height:42px;color:#999999">11</div>
<div class="t mono" style="left:100px;top:421px;font-size:28.07px;line-height:42px;white-space:pre"><span style="color:#000000;">  </span><span style="color:#0000ff;">const</span><span style="color:#000000;"> storyResponse = </span><span style="color:#0000ff;">await</span><span style="color:#000000;"> fetch</span><span style="color:#319331;">(</span><span style="color:#a31515;">`</span><span style="color:#a31515;text-decoration:underline;text-underline-offset:5px;text-decoration-thickness:2px">https://hacker-news.firebaseio.com/v0/item/${topStoryId}.json</span><span style="color:#a31515;">`</span><span style="color:#319331;">)</span><span style="color:#000000;">;</span></div>
<div class="t mono" style="left:0;top:463px;width:49px;text-align:right;font-size:28px;line-height:42px;color:#999999">12</div>
<div class="t mono" style="left:100px;top:463px;font-size:28.07px;line-height:42px;white-space:pre"><span style="color:#000000;">  </span><span style="color:#0000ff;">const</span><span style="color:#000000;"> topStory = </span><span style="color:#0000ff;">await</span><span style="color:#000000;"> storyResponse.json</span><span style="color:#319331;">()</span><span style="color:#000000;">;</span></div>
<div class="t mono" style="left:0;top:505px;width:49px;text-align:right;font-size:28px;line-height:42px;color:#999999">13</div>
<div class="t mono" style="left:100px;top:505px;font-size:28.07px;line-height:42px;white-space:pre"></div>
<div class="t mono" style="left:0;top:547px;width:49px;text-align:right;font-size:28px;line-height:42px;color:#999999">14</div>
<div class="t mono" style="left:100px;top:547px;font-size:28.07px;line-height:42px;white-space:pre"><span style="color:#000000;">  </span><span style="color:#267f22;">// Return the URL of the top story</span></div>
<div class="t mono" style="left:0;top:589px;width:49px;text-align:right;font-size:28px;line-height:42px;color:#999999">15</div>
<div class="t mono" style="left:100px;top:589px;font-size:28.07px;line-height:42px;white-space:pre"><span style="color:#000000;">  </span><span style="color:#0000ff;">return</span><span style="color:#000000;"> topStory.url;</span></div>
<div class="t mono" style="left:0;top:631px;width:49px;text-align:right;font-size:28px;line-height:42px;color:#999999">16</div>
<div class="t mono" style="left:100px;top:631px;font-size:28.07px;line-height:42px;white-space:pre"><span style="color:#0431fa;">}</span></div>
<div class="t mono" style="left:0;top:673px;width:49px;text-align:right;font-size:28px;line-height:42px;color:#999999">17</div>
<div class="t mono" style="left:100px;top:673px;font-size:28.07px;line-height:42px;white-space:pre"></div>
</div>
<div class="t mono" style="left:1490px;top:1103px;width:49px;height:11px;overflow:hidden;text-align:right;font-size:28px;line-height:42px;color:#999"><div style="margin-top:-3px">17</div></div>
<div class="a" style="left:1490px;top:1114px;width:1390px;height:2px;background:#dcdfe3"></div>
<div class="t" style="left:1522px;top:1127.83px;font-size:29.4px;color:#4b5563;font-weight:400;font-family:'Liberation Sans',sans-serif;">Step Input</div>
<div class="t" style="left:1721px;top:1127.64px;font-size:29.8px;color:#4b5563;font-weight:400;font-family:'Liberation Sans',sans-serif;">Test this step</div>
<div class="t" style="left:1961px;top:1127.68px;font-size:29.7px;color:#4b5563;font-weight:400;font-family:'Liberation Sans',sans-serif;">Advanced</div>
<div class="a" style="left:1490px;top:1177px;width:695px;height:2px;background:#e5e7eb"></div>
<div class="a" style="left:1688px;top:1172px;width:240px;height:5px;background:#475569"></div>
<div class="a" style="left:2184px;top:1114px;width:2px;height:686px;background:#dcdfe3"></div>
<div class="a" style="left:1748px;top:1210px;width:177px;height:68px;background:#3b4a6b;border-radius:12px"></div>
<div class="t" style="left:1773px;top:1231.37px;font-size:26.2px;color:#fff;font-weight:700;font-family:'Liberation Sans',sans-serif;">Run</div>
<div class="t" style="left:1843px;top:1232.43px;font-size:24px;color:#a0a8b8;font-weight:400;font-family:'Liberation Sans',sans-serif;">⌘</div>
<svg class="i" style="left:1870px;top:1230px;width:28px;height:26px" viewBox="0 0 28 26" stroke="#a0a8b8" stroke-width="2.2"><path d="M24 3v10a4 4 0 0 1-4 4H4"/><path d="m9 12-5 5 5 5"/></svg>
<svg class="i" style="left:2212.00px;top:1135.00px;width:28px;height:28px;" viewBox="0 0 24 24" stroke="#2d3748" stroke-width="2"><path d="M3 12a9 9 0 1 0 9-9 9.75 9.75 0 0 0-6.74 2.74L3 8"/><path d="M3 3v5h5"/><path d="M12 7v5l4 2"/></svg>
<div class="a" style="left:2262px;top:1123px;width:128px;height:54px;background:#f3f4f6;border-radius:10px"></div>
<svg class="i" style="left:2277.00px;top:1137.50px;width:25px;height:25px;" viewBox="0 0 24 24" stroke="#2d3748" stroke-width="2"><path d="M12 17v5"/><path d="M9 10.76a2 2 0 0 1-1.11 1.79l-1.78.9A2 2 0 0 0 5 15.24V16a1 1 0 0 0 1 1h12a1 1 0 0 0 1-1v-.76a2 2 0 0 0-1.11-1.79l-1.78-.9A2 2 0 0 1 15 10.76V7a1 1 0 0 1 1-1 2 2 0 0 0 0-4H8a2 2 0 0 0 0 4 1 1 0 0 1 1 1z"/></svg>
<div class="t" style="left:2318px;top:1138.17px;font-size:23.5px;color:#2d3748;font-weight:400;font-family:'Liberation Sans',sans-serif;">Pin</div>
<div class="a" style="left:2394px;top:1123px;width:64px;height:54px;background:#4f83ea;border-radius:10px"></div>
<svg class="i" style="left:2413.00px;top:1137.00px;width:26px;height:26px;" viewBox="0 0 24 24" stroke="#fff" stroke-width="2.2"><path d="M12 17v5"/><path d="M9 10.76a2 2 0 0 1-1.11 1.79l-1.78.9A2 2 0 0 0 5 15.24V16a1 1 0 0 0 1 1h12a1 1 0 0 0 1-1v-.76a2 2 0 0 0-1.11-1.79l-1.78-.9A2 2 0 0 1 15 10.76V7a1 1 0 0 1 1-1 2 2 0 0 0 0-4H8a2 2 0 0 0 0 4 1 1 0 0 1 1 1z"/></svg>
<svg class="i" style="left:2479.50px;top:1134.50px;width:29px;height:29px;" viewBox="0 0 24 24" stroke="#2d3748" stroke-width="2"><path d="M21.174 6.812a1 1 0 0 0-3.986-3.987L3.842 16.174a2 2 0 0 0-.5.83l-1.321 4.352a.5.5 0 0 0 .623.622l4.353-1.32a2 2 0 0 0 .83-.497z"/></svg>
<svg class="i" style="left:2731.00px;top:1132.00px;width:28px;height:28px;" viewBox="0 0 24 24" stroke="#2d3748" stroke-width="2"><circle cx="12" cy="12" r="10"/><path d="M12 16v-4"/><path d="M12 8h.01"/></svg>
<svg class="i" style="left:2779.00px;top:1132.00px;width:28px;height:28px;" viewBox="0 0 24 24" stroke="#2d3748" stroke-width="2"><rect width="8" height="4" x="8" y="2" rx="1" ry="1"/><path d="M8 4H6a2 2 0 0 0-2 2v14a2 2 0 0 0 2 2h12a2 2 0 0 0 2-2v-2"/><path d="M16 4h2a2 2 0 0 1 2 2v4"/><path d="M21 14H11"/><path d="m15 10-4 4 4 4"/></svg>
<svg class="i" style="left:2828.00px;top:1132.00px;width:28px;height:28px;" viewBox="0 0 24 24" stroke="#2d3748" stroke-width="2"><path d="m21 21-6-6m6 6v-4.8m0 4.8h-4.8"/><path d="M3 16.2V21m0 0h4.8M3 21l6-6"/><path d="M21 7.8V3m0 0h-4.8M21 3l-6 6"/><path d="M3 7.8V3m0 0h4.8M3 3l6 6"/></svg>
<div class="t" style="left:2203px;top:1201.21px;font-size:22.4px;color:#475569;font-weight:400;font-family:'Liberation Mono',monospace;">https://www.geoffreylitt.com/2025/04/12/how-i-</div>
<div class="t" style="left:2203px;top:1241.21px;font-size:22.4px;color:#475569;font-weight:400;font-family:'Liberation Mono',monospace;">made-a-useful-ai-assistant-with-one-sqlite-table-</div>
<div class="t" style="left:2203px;top:1281.21px;font-size:22.4px;color:#475569;font-weight:400;font-family:'Liberation Mono',monospace;">and-a-handful-of-cron-jobs</div>
<div class="t" style="left:2226px;top:1329.43px;font-size:24px;color:#2d3748;font-weight:700;font-family:'Liberation Sans',sans-serif;">Copy</div>
<svg class="i" style="left:2302.00px;top:1329.00px;width:24px;height:24px;" viewBox="0 0 24 24" stroke="#2d3748" stroke-width="2"><rect width="8" height="4" x="8" y="2" rx="1" ry="1"/><path d="M8 4H6a2 2 0 0 0-2 2v14a2 2 0 0 0 2 2h12a2 2 0 0 0 2-2v-2"/><path d="M16 4h2a2 2 0 0 1 2 2v4"/><path d="M21 14H11"/><path d="m15 10-4 4 4 4"/></svg>
<div class="a" style="left:2186px;top:1457px;width:694px;height:2px;background:#dcdfe3"></div>
<div class="a" style="left:2186px;top:1459px;width:694px;height:341px;background:#f3f4f6"></div>
<svg class="i" style="left:2663.00px;top:1467.00px;width:24px;height:24px;" viewBox="0 0 24 24" stroke="#2d3748" stroke-width="2"><path d="m21 21-6-6m6 6v-4.8m0 4.8h-4.8"/><path d="M3 16.2V21m0 0h4.8M3 21l6-6"/><path d="M21 7.8V3m0 0h-4.8M21 3l-6 6"/><path d="M3 7.8V3m0 0h4.8M3 3l6 6"/></svg>
<div class="t" style="left:2704px;top:1467.53px;font-size:23.8px;color:#4b5563;font-weight:400;font-family:'Liberation Sans',sans-serif;">Auto scroll</div>
<svg class="i" style="left:2836.00px;top:1467.00px;width:24px;height:24px;" viewBox="0 0 24 24" stroke="#000" stroke-width="3.6"><path d="M20 6 9 17l-5-5"/></svg>
<div class="t" style="left:2203px;top:1521.39px;font-size:22px;color:#2d3748;font-weight:400;font-family:'Liberation Mono',monospace;">Using pinned data</div>

</body></html>
